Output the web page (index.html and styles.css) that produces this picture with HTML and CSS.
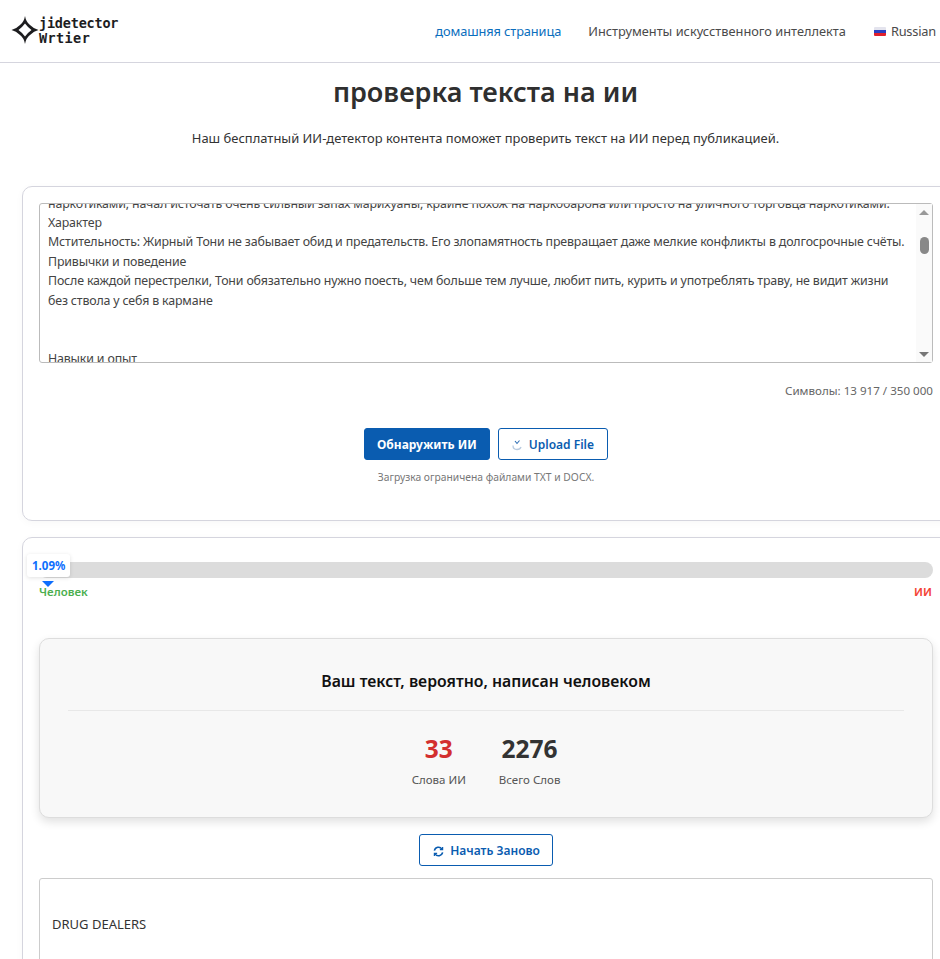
FILE: index.html
```html
<!DOCTYPE html>
<html lang="ru">
<head>
  <meta charset="UTF-8" />
  <meta name="viewport" content="width=device-width, initial-scale=1.0"/>
  <title>проверка текста на ии</title>
  <link rel="stylesheet" href="styles.css">
</head>
<body>

<header class="topbar">
  <a class="logo" href="#">
    <svg class="logo-star" width="28" height="30" viewBox="0 0 28 30">
      <path d="M14 1 Q15 7 19 10 Q23 14 27.5 15 Q23 16 19 20 Q15 23 14 29 Q13 23 9 20 Q5 16 .5 15 Q5 14 9 10 Q13 7 14 1 Z M14 8.5 Q11 12.5 7.5 15 Q11 17.5 14 21.5 Q17 17.5 20.5 15 Q17 12.5 14 8.5 Z" fill="#1d1d1f" fill-rule="evenodd"/>
    </svg>
    <span class="logo-text">
      <span class="logo-top">jidetector</span>
      <span class="logo-bottom">Wrtier</span>
    </span>
  </a>
  <nav class="nav">
    <a class="nav-link active" href="#">домашняя страница</a>
    <a class="nav-link" href="#">Инструменты искусственного интеллекта</a>
    <a class="nav-link lang" href="#">
      <span class="flag"><i class="flag-w"></i><i class="flag-b"></i><i class="flag-r"></i></span>
      Russian
    </a>
  </nav>
</header>

<h1>проверка текста на ии</h1>
<p class="lead">Наш бесплатный ИИ-детектор контента поможет проверить текст на ИИ перед публикацией.</p>

<!-- Input card -->
<section class="card card-input">
  <div class="textbox">
    <div class="textbox-text">
      <div class="textbox-inner">
        <p>наркотиками, начал источать очень сильный запах марихуаны, крайне похож на наркобарона или просто на уличного торговца наркотиками.</p>
        <p>Характер</p>
        <p>Мстительность: Жирный Тони не забывает обид и предательств. Его злопамятность превращает даже мелкие конфликты в долгосрочные счёты.</p>
        <p>Привычки и поведение</p>
        <p>После каждой перестрелки, Тони обязательно нужно поесть, чем больше тем лучше, любит пить, курить и употреблять траву, не видит жизни без ствола у себя в кармане</p>
        <p>&nbsp;</p>
        <p>&nbsp;</p>
        <p>Навыки и опыт</p>
      </div>
    </div>
    <div class="scrollbar">
      <span class="arrow-up"></span>
      <span class="thumb"></span>
      <span class="arrow-down"></span>
    </div>
  </div>
  <div class="counter">Символы: 13 917 / 350 000</div>
  <div class="actions">
    <button class="btn btn-primary">Обнаружить ИИ</button>
    <button class="btn btn-outline btn-upload">
      <svg width="12" height="12" viewBox="0 0 12 12" fill="none">
        <path d="M2 6.5 C2 9 3.5 10.5 6 10.5 C8 10.5 9.5 9.5 10 8" stroke="#b9cbe0" stroke-width="1.3"/>
        <path d="M4 2 L6 4.5 L8.5 1.5" stroke="#2f6fb5" stroke-width="1.1"/>
      </svg>
      Upload File
    </button>
  </div>
  <p class="hint">Загрузка ограничена файлами TXT и DOCX.</p>
</section>

<!-- Result card -->
<section class="card card-result">
  <div class="meter">
    <div class="meter-bar"></div>
    <div class="meter-badge">1.09%</div>
    <div class="meter-arrow"></div>
    <div class="meter-labels">
      <span class="label-human">Человек</span>
      <span class="label-ai">ИИ</span>
    </div>
  </div>

  <div class="summary">
    <h2>Ваш текст, вероятно, написан человеком</h2>
    <div class="stats">
      <div class="stat">
        <div class="stat-num red">33</div>
        <div class="stat-name">Слова ИИ</div>
      </div>
      <div class="stat">
        <div class="stat-num">2276</div>
        <div class="stat-name">Всего Слов</div>
      </div>
    </div>
  </div>

  <div class="restart">
    <button class="btn btn-outline btn-small">
      <svg width="11" height="11" viewBox="0 0 12 12" fill="none" stroke="#0a5cb0" stroke-width="1.7">
        <path d="M1.5 5 A4.6 4.6 0 0 1 9.8 3.4"/>
        <path d="M10.5 7 A4.6 4.6 0 0 1 2.2 8.6"/>
        <path d="M10.5 1 V4 H7.5" stroke-width="1.3"/>
        <path d="M1.5 11 V8 H4.5" stroke-width="1.3"/>
      </svg>
      Начать Заново
    </button>
  </div>

  <div class="output">
    <p>DRUG DEALERS</p>
  </div>
</section>

</body>
</html>
```

FILE: styles.css
```css
html, body {
  overflow-x: hidden;
}
body {
  font-family: "Noto Sans", Arial, sans-serif;
  margin: 0;
  color: #333;
  background: #fff;
}
p {
  margin: 0;
}
a {
  text-decoration: none;
}

/* Top bar */
.topbar {
  display: flex;
  justify-content: space-between;
  align-items: center;
  height: 62px;
  border-bottom: 1px solid #d5d5de;
  padding: 0 4px 0 11px;
}
.logo {
  display: flex;
  align-items: center;
  gap: 0;
  color: #1d1d1f;
  margin-bottom: 2px;
}
.logo-text {
  font-family: "DejaVu Sans Mono", monospace;
  font-size: 13.5px;
  line-height: 15px;
  font-weight: 700;
  margin-top: 1px;
}
.logo-top, .logo-bottom {
  display: block;
}
.logo-top {
  letter-spacing: -0.2px;
}
.logo-bottom {
  letter-spacing: 0.4px;
}
.nav {
  display: flex;
  align-items: center;
  gap: 27px;
  font-size: 12.8px;
}
.nav-link {
  color: #4a4a4a;
}
.nav-link.active {
  color: #0a6ebd;
  letter-spacing: -0.1px;
}
.lang {
  display: flex;
  align-items: center;
  gap: 5px;
  margin-left: 1px;
  letter-spacing: -0.2px;
}
.flag {
  display: flex;
  flex-direction: column;
  width: 12px;
  height: 9px;
  border-radius: 1px;
  overflow: hidden;
}
.flag i {
  flex: 1;
}
.flag-w { background: #e4e4ee; }
.flag-b { background: #2a3fc0; }
.flag-r { background: #e0202c; }

/* Title */
h1 {
  font-size: 27px;
  font-weight: 600;
  line-height: 36px;
  text-align: center;
  color: #2f2f2f;
  margin: 11px 0 0 31px;
}
.lead {
  font-size: 12.96px;
  line-height: 18px;
  text-align: center;
  color: #333;
  margin: 19px 0 0 31px;
}

/* Cards */
.card {
  border: 1px solid #d5d5de;
  border-radius: 10px;
  margin-left: 22px;
  width: 950px;
  box-sizing: border-box;
  padding: 16px;
  box-shadow: 0 2px 8px rgba(0, 0, 0, 0.03);
}
.card-input {
  margin-top: 39px;
  height: 335px;
}
.card-result {
  margin-top: 16px;
  padding-top: 24px;
  padding-bottom: 0;
}

/* Fake textarea */
.textbox {
  display: flex;
  width: 894px;
  height: 160px;
  box-sizing: border-box;
  border: 1px solid #bbb;
  border-radius: 3px;
}
.textbox-text {
  flex: 1;
  overflow: hidden;
  padding: 0 8px;
  font-size: 12.4px;
  letter-spacing: -0.16px;
  line-height: 19.4px;
  color: #444;
}
.textbox-inner {
  margin-top: -10.5px;
}
.scrollbar {
  width: 16px;
  background: #fafafa;
  display: flex;
  flex-direction: column;
  align-items: center;
  padding: 6px 0 5px;
  box-sizing: border-box;
}
.arrow-up {
  border: 5px solid transparent;
  border-top: 0;
  border-bottom: 5px solid #999;
}
.arrow-down {
  border: 5px solid transparent;
  border-bottom: 0;
  border-top: 5px solid #777;
  margin-top: auto;
}
.thumb {
  width: 9px;
  height: 17px;
  border-radius: 4.5px;
  background: #888;
  margin-top: 22px;
}
.counter {
  width: 894px;
  text-align: right;
  font-size: 11.6px;
  line-height: 16px;
  color: #666;
  margin-top: 20px;
}
.actions {
  display: flex;
  justify-content: center;
  gap: 8px;
  width: 894px;
  margin-top: 29px;
}

/* Buttons */
.btn {
  font-family: "Noto Sans", Arial, sans-serif;
  font-size: 12px;
  font-weight: 600;
  height: 32px;
  padding: 0 12px;
  border-radius: 3px;
  box-sizing: border-box;
  cursor: pointer;
}
.btn-primary {
  background: #0a5cb0;
  border: 1px solid #0a5cb0;
  color: #fff;
  font-weight: 700;
}
.btn-outline {
  background: #fff;
  border: 1px solid #0a5cb0;
  color: #0a5cb0;
}
.btn-upload {
  padding-right: 13px;
}
.btn-small {
  padding-left: 13px;
}
.btn svg {
  vertical-align: -2px;
  margin-right: 3px;
}
.hint {
  width: 894px;
  text-align: center;
  font-size: 10.3px;
  line-height: 14px;
  color: #777;
  margin-top: 10px;
}

/* Meter */
.meter {
  position: relative;
  width: 894px;
}
.meter-bar {
  height: 16px;
  background: #dcdcdc;
  border-radius: 8px;
}
.meter-badge {
  position: absolute;
  left: -12px;
  top: -8px;
  background: #fff;
  color: #0d6efd;
  font-size: 11.5px;
  font-weight: 700;
  line-height: 23px;
  padding: 0 5px;
  border-radius: 3px;
  box-shadow: 0 1px 4px rgba(0, 0, 0, 0.12);
}
.meter-arrow {
  position: absolute;
  left: 3px;
  top: 19px;
  border: 6px solid transparent;
  border-top: 6px solid #0d6efd;
  border-bottom: 0;
}
.meter-labels {
  display: flex;
  justify-content: space-between;
  font-size: 11.5px;
  font-weight: 600;
  line-height: 16px;
  margin-top: 6px;
}
.label-human {
  color: #4caf50;
}
.label-ai {
  color: #f44336;
  padding-right: 1px;
}

/* Summary box */
.summary {
  width: 894px;
  height: 180px;
  box-sizing: border-box;
  margin-top: 38px;
  background: #f8f8f8;
  border: 1px solid #ddd;
  border-radius: 10px;
  padding: 0 28px;
  box-shadow: 0 4px 10px rgba(0, 0, 0, 0.12);
}
.summary h2 {
  font-size: 15.8px;
  font-weight: 600;
  line-height: 20px;
  text-align: center;
  color: #111;
  margin: 0;
  padding: 32px 0 19px;
  border-bottom: 1px solid #e8e8e8;
}
.stats {
  display: flex;
  justify-content: center;
  gap: 33px;
  margin-top: 22px;
}
.stat {
  text-align: center;
}
.stat-num {
  font-size: 24.5px;
  font-weight: 700;
  line-height: 32px;
  color: #333;
}
.stat-num.red {
  color: #d32f2f;
}
.stat-name {
  font-size: 11.5px;
  line-height: 16px;
  color: #555;
  margin-top: 7px;
}

/* Restart + output */
.restart {
  display: flex;
  justify-content: center;
  width: 894px;
  margin-top: 16px;
}
.output {
  width: 894px;
  box-sizing: border-box;
  margin-top: 12px;
  border: 1px solid #ccc;
  border-radius: 3px;
  padding: 36px 12px 20px;
  font-size: 13px;
  line-height: 18px;
  color: #333;
  height: 200px;
}
```
